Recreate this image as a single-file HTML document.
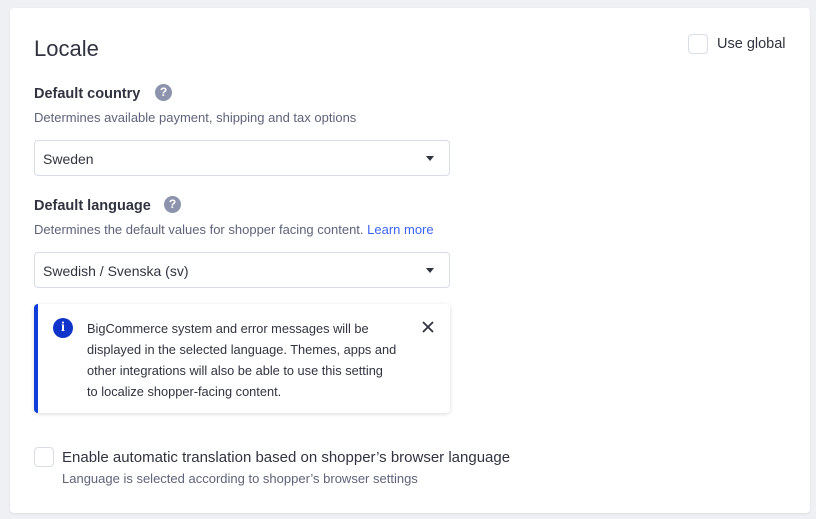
<!DOCTYPE html>
<html><head><style>
*{box-sizing:border-box;margin:0;padding:0}
body{width:816px;height:519px;background:#eff0f4;font-family:"Liberation Sans",sans-serif;color:#313440;position:relative;overflow:hidden}
.card{position:absolute;left:10px;top:8px;width:800px;height:505px;background:#fff;border-radius:4px;box-shadow:0 1px 2px rgba(0,0,0,.08)}
.a{position:absolute;white-space:nowrap}
.h{font-size:22px;left:24px;top:28px;color:#313440}
.lbl{font-size:14.5px;font-weight:bold;left:24px}
.desc{font-size:13px;color:#5e637a;left:24px}
.q{position:absolute;width:17px;height:17px;border-radius:50%;background:#8c93ad;color:#fff;font-size:12px;font-weight:bold;text-align:center;line-height:17px}
.sel{position:absolute;left:24px;width:416px;height:36px;border:1px solid #d9dce9;border-radius:4px;font-size:14px;padding:10px 0 0 8px}
.sel:after{content:"";position:absolute;right:15px;top:15px;border-left:4.5px solid transparent;border-right:4.5px solid transparent;border-top:5px solid #313440}
.cb{position:absolute;width:20px;height:20px;border:1px solid #d9dce9;border-radius:4px;background:#fff}
.alert{position:absolute;left:24px;top:296px;width:416px;height:109px;border-radius:4px;box-shadow:0 1px 4px rgba(0,0,0,.15);border-left:4px solid #0d3dd9;background:#fff}
.alert p{position:absolute;left:49px;top:14px;font-size:12.8px;line-height:21px;color:#313440}
.info{position:absolute;left:15px;top:14px;width:20px;height:20px;border-radius:50%;background:#1034c9;color:#fff;font-weight:bold;font-family:"Liberation Serif",serif;font-size:14px;text-align:center;line-height:20px}
</style></head><body>
<div class="card">
<div class="a h">Locale</div>
<div class="cb" style="left:678px;top:26px"></div>
<div class="a" style="left:707px;top:28px;font-size:14.5px">Use global</div>
<div class="a lbl" style="top:78px">Default country</div>
<div class="q" style="left:145px;top:76px">?</div>
<div class="a desc" style="top:102px">Determines available payment, shipping and tax options</div>
<div class="sel" style="top:132px">Sweden</div>
<div class="a lbl" style="top:190px">Default language</div>
<div class="q" style="left:154px;top:188px">?</div>
<div class="a desc" style="top:214px">Determines the default values for shopper facing content. <span style="color:#3c64f4">Learn more</span></div>
<div class="sel" style="top:244px">Swedish / Svenska (sv)</div>
<div class="alert"><div class="info">i</div>
<p>BigCommerce system and error messages will be<br>displayed in the selected language. Themes, apps and<br>other integrations will also be able to use this setting<br>to localize shopper-facing content.</p>
<svg style="position:absolute;left:384px;top:17px" width="12" height="12" viewBox="0 0 12 12"><path d="M1 1L11 11M11 1L1 11" stroke="#313440" stroke-width="1.8"/></svg>
</div>
<div class="cb" style="left:24px;top:439px"></div>
<div class="a" style="left:52px;top:441px;font-size:15px">Enable automatic translation based on shopper’s browser language</div>
<div class="a desc" style="left:52px;top:463px">Language is selected according to shopper’s browser settings</div>
</div>
</body></html>
